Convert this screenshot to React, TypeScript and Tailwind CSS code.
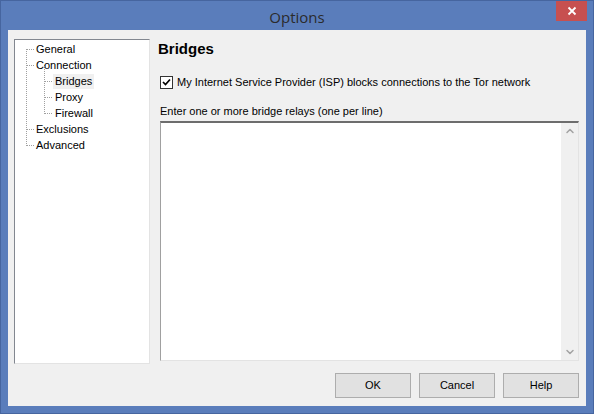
import { ChevronUp, ChevronDown } from "lucide-react";

const font = { fontFamily: '"Liberation Sans", Arial, sans-serif' };

const tree = [
  { label: "General", level: 0 },
  { label: "Connection", level: 0 },
  { label: "Bridges", level: 1, selected: true },
  { label: "Proxy", level: 1 },
  { label: "Firewall", level: 1 },
  { label: "Exclusions", level: 0 },
  { label: "Advanced", level: 0 },
];

function Btn({ children }: { children: string }) {
  return (
    <button className="w-[76px] h-[25px] bg-[#e1e1e1] border border-[#adadad] text-[11px] text-black outline outline-1 outline-[#f0f0f0]">
      {children}
    </button>
  );
}

export default function App() {
  return (
    <div
      className="w-[594px] h-[414px] bg-[#5a7dbb] border border-[#46659f] flex flex-col text-[11px] text-black"
      style={font}
    >
      {/* Title bar */}
      <div className="h-[29px] flex items-start relative">
        <div
          className="flex-1 text-center pt-[5px] text-[15px] text-[#2b2b2b]"
          style={{ fontFamily: '"Open Sans", "Noto Sans", sans-serif' }}
        >
          Options
        </div>
        <button className="absolute right-[6px] top-0 w-[31px] h-[20px] bg-[#c75050] flex items-center justify-center">
          <svg width="10" height="10" viewBox="0 0 10 10">
            <path d="M1.5 1.5 L8.5 8.5 M8.5 1.5 L1.5 8.5" stroke="#fff" strokeWidth="1.8" />
          </svg>
        </button>
      </div>

      {/* Client area */}
      <div className="flex-1 mx-[7px] mb-[7px] bg-[#f0f0f0] flex flex-col">
        <div className="flex pt-[9px] pl-[6px]">
          {/* Tree */}
          <div className="relative w-[136px] h-[325px] bg-white border border-[#828790] border-r-[#e3e3e3] border-b-[#e3e3e3]">
            <svg className="absolute left-0 top-0" width="134" height="120">
              <g stroke="#a0a0a0" strokeWidth="1" strokeDasharray="1 1" fill="none" shapeRendering="crispEdges">
                <line x1="11.5" y1="9" x2="11.5" y2="106" />
                <line x1="29.5" y1="25" x2="29.5" y2="74" />
                {[9, 25, 89, 105].map((y) => (
                  <line key={y} x1="12" y1={y + 0.5} x2="20" y2={y + 0.5} />
                ))}
                {[41, 57, 73].map((y) => (
                  <line key={y} x1="30" y1={y + 0.5} x2="38" y2={y + 0.5} />
                ))}
              </g>
            </svg>
            <ul className="relative pt-[1px]">
              {tree.map((t) => (
                <li
                  key={t.label}
                  className={`h-[16px] flex items-center ${t.level ? "pl-[38px]" : "pl-[19px]"}`}
                >
                  <span className={`px-[2px] leading-[15px] ${t.selected ? "bg-[#f0f0f0]" : ""}`}>
                    {t.label}
                  </span>
                </li>
              ))}
            </ul>
          </div>

          {/* Right panel */}
          <div className="ml-[8px] flex flex-col">
            <div className="h-[18px] mt-[1px] text-[15px] font-bold leading-[18px]">Bridges</div>
            <label className="flex items-center mt-[17px] ml-[2px] h-[14px]">
              <span className="w-[13px] h-[13px] bg-white border border-[#333] flex items-center justify-center">
                <svg width="9" height="9" viewBox="0 0 9 9">
                  <path d="M1 4 L3.5 6.5 L8 1.5" stroke="#000" strokeWidth="1.7" fill="none" />
                </svg>
              </span>
              <span className="ml-[4px]">My Internet Service Provider (ISP) blocks connections to the Tor network</span>
            </label>
            <div className="mt-[15px] ml-[2px] h-[14px] leading-[14px]">Enter one or more bridge relays (one per line)</div>
            <div className="mt-[3px] ml-[2px] w-[419px] h-[240px] bg-white border border-[#a0a0a0] border-t-2 border-t-[#6d6d6d] border-r-[#e3e3e3] border-b-[#e3e3e3] flex justify-end">
              <div className="w-[17px] h-full bg-[#f0f0f0] flex flex-col justify-between items-center py-[2px] text-[#a3a3a3]">
                <ChevronUp size={12} strokeWidth={3} />
                <ChevronDown size={12} strokeWidth={3} />
              </div>
            </div>
          </div>
        </div>

        {/* Buttons */}
        <div className="flex justify-end gap-[8px] mt-[9px] pr-[7px]">
          <Btn>OK</Btn>
          <Btn>Cancel</Btn>
          <Btn>Help</Btn>
        </div>
      </div>
    </div>
  );
}
